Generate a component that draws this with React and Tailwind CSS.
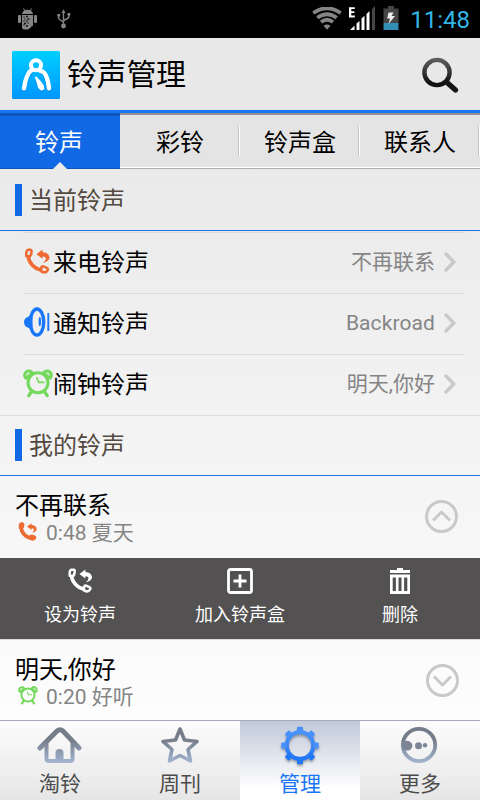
import React from "react";

const cjk = "font-['Noto_Sans_CJK_SC',sans-serif] whitespace-nowrap";
const latin = "font-['Roboto','Noto_Sans_CJK_SC',sans-serif]";

function CallIcon({ className, bold = false }) {
  return (
    <svg viewBox="0 0 26 26" className={className} fill="none" stroke="currentColor">
      <path d="M4.2 7 C4.2 14.500 11 21.800 18.500 21.800" strokeWidth={bold ? 5 : 3.8} />
      <path d="M4 1.800 L6.400 1.800 Q7.700 2 7.500 3.600 L7 6.800 Q6.400 8.400 4.600 8.200 L2.400 8 Q1.600 3 4 1.800 Z" strokeWidth="2.6" fill={bold ? "currentColor" : "none"} />
      <path d="M17.6 19 Q18.400 17.800 20 18.600 L22.800 19.800 Q24.200 20.600 23.600 22.200 Q22.400 24.800 19 24.200 L17 23.200 Q16.200 22.200 17.600 19 Z" strokeWidth="2.6" fill={bold ? "currentColor" : "none"} />
      <path d="M12.4 6.200 L18.600 1.600 L18.600 4.200 Q25 4.600 25.600 9.800 Q25 13.200 19 15 Q22.600 11.600 21.600 9.800 Q20.800 8.600 18.600 8.600 L18.600 10.800 Z" fill="currentColor" stroke="none" />
    </svg>
  );
}

function BellIcon({ className }) {
  return (
    <svg viewBox="0 0 26 30" className={className} fill="none" stroke="currentColor">
      <path d="M8.500 6.500 L4.400 9.800 Q0 11 0 15 Q0 19.500 4.400 20.700 L8.500 23.500 Z" fill="currentColor" stroke="none" />
      <ellipse cx="13" cy="15" rx="6.700" ry="13" strokeWidth="3.400" />
      <ellipse cx="15.800" cy="14.600" rx="1.200" ry="4.600" fill="currentColor" stroke="none" />
      <path d="M24.300 6 V24" strokeWidth="1.900" />
    </svg>
  );
}

function AlarmIcon({ className }) {
  return (
    <svg viewBox="0 0 30 29" className={className} fill="none" stroke="currentColor" strokeLinecap="round">
      <circle cx="15" cy="13.800" r="10" strokeWidth="3" />
      <path d="M2.800 9 A4 4 0 1 1 9 3.400 M27.200 9 A4 4 0 1 0 21 3.400 M4 8.400 L8.800 4.500 M26 8.400 L21.200 4.500" strokeWidth="3.200" />
      <path d="M8.600 22.500 L5.800 26.600 M21.400 22.500 L24.200 26.600" strokeWidth="3.400" />
      <path d="M13.600 8.400 L15.800 13.300 H21.500" strokeWidth="1.700" strokeLinecap="butt" />
    </svg>
  );
}

function StatusBar() {
  return (
    <div className="flex h-[38px] items-center bg-black">
      <svg width="19" height="22" viewBox="0 0 19 22" className="ml-[18px] text-[#858585]" fill="currentColor">
        <path d="M4 6 Q5 1.800 9.500 1.800 Q14 1.800 15 6 Z M4 7 H15 V17 Q15 18.500 13 18.500 V19.500 L10 21.500 H5.500 L4 20 Z" />
        <rect x="0" y="7" width="3" height="8" rx="1" />
        <rect x="16" y="7" width="3" height="8" rx="1" />
        <path d="M5.500 .5 L7 3 M13.500 .5 L12 3" stroke="currentColor" />
        <path d="M5.500 9 h1 M8 8.500 h2 M6.500 11 h1 M9.500 11 h2 M5.500 13 h1 M8 13 h1.500 M6 15.500 h2 M9.500 15 h1 M5.500 17 h1 M8 18 h2" stroke="#161616" strokeWidth="1.300" />
      </svg>
      <svg width="14" height="20" viewBox="0 0 14 20" className="ml-[20px] text-[#858585]" fill="none" stroke="currentColor" strokeWidth="1.400">
        <path d="M6.500 3 V16 M1.600 6 V9 Q1.600 10.500 6.500 13 M11.800 5 V8 Q11.500 9.500 6.500 11.500" />
        <path d="M4.500 4 L6.500 .2 L8.500 4 Z M.4 5 h2.800 v2.500 h-2.800 Z M10.500 4 h2.800 v2.500 h-2.800 Z" fill="currentColor" stroke="none" />
        <circle cx="6.500" cy="17" r="2.400" fill="currentColor" stroke="none" />
      </svg>
      <svg width="30" height="23" viewBox="0 0 30 23" className="mb-[1px] ml-auto" fill="none" stroke="#858585" strokeWidth="3.800">
        <path d="M1.300 6 Q15 -3.500 28.700 6 M5.300 10.700 Q15 3.700 24.700 10.700 M9 15 Q15 10.600 21 15" />
        <path d="M11.500 18.800 Q15 16 18.500 18.800 L15 22.800 Z" fill="#858585" stroke="none" />
      </svg>
      <svg width="27" height="25" viewBox="0 0 27 25" className="mb-[3px] ml-[6px]">
        <path d="M1 2.200 H6.800 V4.100 H3.300 V6.300 H6.400 V8 H3.300 V10.600 H6.800 V12.600 H1 Z" fill="white" />
        <path d="M2 25 L6.500 20.500 V25 Z M8.500 18.500 L11.500 16 V25 H8.500 Z M13.500 13.500 L16.500 10.800 V25 H13.500 Z M18.500 9 L21.500 6 V25 H18.500 Z" fill="white" />
        <path d="M24 4 L27 1 V25 H24 Z" fill="#454545" />
      </svg>
      <svg width="16" height="24" viewBox="0 0 16 24" className="mb-[2px] ml-[8px]">
        <path d="M5 0 H11 V2.500 H15.500 V17 H.5 V2.500 H5 Z" fill="#454545" />
        <rect x=".5" y="17" width="15" height="7" fill="#318fb3" />
        <path d="M5.500 6.500 H10.500 L8.500 10 H12 L5.500 18 L7 12.500 H4.200 Z" fill="#eee" />
      </svg>
      <span className={`${latin} mt-[1px] mr-[10px] ml-[11px] text-[24px] leading-[24px] text-[#33b5e5]`}>11:48</span>
    </div>
  );
}

function Header() {
  return (
    <div className="flex h-[72px] items-center bg-[#e8e8e8] pl-[12px]">
      <svg width="48" height="48" viewBox="0 0 48 48" className="mt-[2px]">
        <defs>
          <linearGradient id="logo" x1="0" y1="0" x2="0" y2="1">
            <stop offset="0" stopColor="#00cfff" />
            <stop offset="1" stopColor="#0096ff" />
          </linearGradient>
        </defs>
        <rect width="48" height="48" rx="1.500" fill="url(#logo)" />
        <g fill="none" strokeLinecap="round" strokeLinejoin="round">
          <g stroke="#0880dc" opacity=".6" transform="translate(0 1.500)">
            <path d="M18.500 20.500 Q14 25 12 37.300 M30 20.500 Q35 22 37 37.300 M25.500 29 L30 37.500" strokeWidth="4.400" />
          </g>
          <g stroke="white">
            <circle cx="24" cy="14.300" r="5" strokeWidth="4" />
            <path d="M20 18.500 Q14 23 12 37.300 M28.500 20 Q35 20.500 37 37.300" strokeWidth="4.400" />
            <path d="M24 26.500 L27 36.500 Q29.500 40 31.500 37.500 Q32 34.500 24 26.500 Z" fill="white" strokeWidth="1.800" />
          </g>
        </g>
      </svg>
      <h1 className={`${cjk} mb-[5px] ml-[7px] text-[30px] leading-[40px] font-normal tracking-[-0.300px] text-black`}>铃声管理</h1>
      <svg width="38" height="38" viewBox="0 0 38 38" className="mt-[2px] mr-[21px] ml-auto" fill="none">
        <defs>
          <linearGradient id="lens" x1="0" y1="0" x2="0" y2="36" gradientUnits="userSpaceOnUse">
            <stop offset="0" stopColor="#686868" />
            <stop offset=".75" stopColor="#111" />
          </linearGradient>
        </defs>
        <circle cx="16" cy="16.500" r="12.600" stroke="url(#lens)" strokeWidth="4.400" />
        <path d="M26 26.500 L34.500 34" stroke="#161616" strokeWidth="5.200" strokeLinecap="round" />
      </svg>
    </div>
  );
}

function Tabs() {
  return (
    <div className="grid h-[56px] grid-cols-4 border-b border-[#adadad] bg-[#e4e4e4]">
      <div className="relative flex justify-center border-t-[3px] border-[#1055b8] bg-[#1269e6] pt-[8px] shadow-[0_1px_0_#1055b8]">
        <span className={`${cjk} mr-[2px] text-[24px] leading-[34px] text-white`}>铃声</span>
        <span className="absolute bottom-[-1px] left-[53px] h-[7px] w-[14px] bg-[#ebebeb] [clip-path:polygon(50%_0,100%_100%,0_100%)]" />
      </div>
      {["彩铃", "铃声盒", "联系人"].map((name) => (
        <div key={name} className="flex border-t-2 border-b border-t-[#949290] border-b-white pt-[9px]">
          <span className={`${cjk} w-full pl-[2px] text-center text-[24px] leading-[34px] text-black`}>{name}</span>
          <span className="mt-[2px] h-[30px] w-[2px] shrink-0 border-r border-l border-r-white border-l-[#c6c6c6]" />
        </div>
      ))}
    </div>
  );
}

function Section({ title }) {
  return (
    <div className="flex h-full items-center pl-[15px]">
      <span className="h-[32px] w-[7px] bg-[#1269e6]" />
      <h2 className={`${cjk} mb-[2px] ml-[7px] text-[24px] leading-[34px] font-normal text-[#534940]`}>{title}</h2>
    </div>
  );
}

function SettingRow({ icon, label, value, last }) {
  return (
    <div className={last ? "h-[60px]" : "h-[61px]"}>
      <div className={`flex h-full items-center ${last ? "" : "mr-[15px] ml-[23px] border-b border-[#dcdcdc]"}`}>
        <span className={`flex w-[30px] justify-center ${last ? "ml-[23px]" : ""}`}>{icon}</span>
        <span className={`${cjk} mb-[5px] text-[24px] leading-[34px] text-black`}>{label}</span>
        <span className={`${latin} mb-[2px] ml-auto text-[21px] leading-[30px] whitespace-nowrap text-[#858585]`}>{value}</span>
        <svg width="13" height="20" viewBox="0 0 13 20" className={`mb-[2px] ml-[9px] ${last ? "mr-[23px]" : "mr-[8px]"}`} fill="none" stroke="#c9c9c9" strokeWidth="3.400">
          <path d="M2 2 L9.800 10 L2 18" strokeLinecap="round" />
        </svg>
      </div>
    </div>
  );
}

function Song({ title, time, name, icon, open }) {
  return (
    <div className="flex h-full pt-[14px] pl-[15px]">
      <div>
        <div className={`${latin} h-[30px] text-[24px] leading-[32px] whitespace-nowrap text-black`}>{title}</div>
        <div className="flex h-[26px] items-start">
          <span className="flex w-[31px] pt-[2px] pl-[3px]">{icon}</span>
          <span className={`${latin} text-[21px] leading-[26px] whitespace-nowrap text-[#858585]`}>{time} {name}</span>
        </div>
      </div>
      <svg width="34" height="34" viewBox="0 0 34 34" className={`mt-[10px] ml-auto ${open ? "mr-[22px]" : "mr-[21px]"}`} fill="none" stroke="#c9c9c9" strokeWidth="3">
        <circle cx="17.500" cy="16.500" r="15" />
        <path d={open ? "M9 20.500 L17.500 12 L26 20.500" : "M9 12.500 L17.500 21 L26 12.500"} strokeLinejoin="round" />
      </svg>
    </div>
  );
}

function Action({ icon, label }) {
  return (
    <div className="flex flex-col items-center pt-[10px]">
      <span className="h-[26px]">{icon}</span>
      <span className={`${cjk} mt-[6px] text-[18px] leading-[26px] text-white`}>{label}</span>
    </div>
  );
}

function NavItem({ icon, label, active }) {
  return (
    <div className={`flex flex-col items-center pt-[4px] ${active ? "bg-linear-to-b from-[#c1c9d9] to-white to-85%" : ""}`}>
      {icon}
      <span className={`${cjk} text-[21px] leading-[30px] ${active ? "text-[#1a76f5]" : "text-[#4c4c4c]"}`}>{label}</span>
    </div>
  );
}

const teeth = [0, 45, 90, 135, 180, 225, 270, 315];

export default function App() {
  return (
    <div className="h-[800px] w-[480px] overflow-hidden bg-[#fcfcfc]">
      <StatusBar />
      <Header />
      <div className="h-[3px] bg-[#1a75f8]" />
      <Tabs />
      <div className="flex h-[551px] flex-col bg-linear-to-b from-[#eaeaea] to-[#fdfdfd]">
        <div className="h-[62px] border-b border-[#1f74ec]"><Section title="当前铃声" /></div>
        <div className="mr-[15px] ml-[23px] h-[2px] border-b border-[#dcdcdc]" />
        <SettingRow icon={<CallIcon className="mr-[3px] mb-[5px] h-[26px] w-[26px] text-[#ee6b34]" />} label="来电铃声" value="不再联系" />
        <SettingRow icon={<BellIcon className="mr-[3px] mb-[4px] h-[30px] w-[26px] text-[#1a76f8]" />} label="通知铃声" value={<span className="tracking-[0.100px]">Backroad</span>} />
        <SettingRow icon={<AlarmIcon className="mb-[4px] h-[29px] w-[30px] text-[#74d95c]" />} label="闹钟铃声" value="明天,你好" last />
        <div className="h-[61px] border-t border-b border-t-[#dcdcdc] border-b-[#1f74ec] pb-[2px]"><Section title="我的铃声" /></div>
        <div className="h-[82px]">
          <Song title="不再联系" time="0:48" name="夏天" icon={<CallIcon bold className="h-[19px] w-[19px] text-[#ee6b34]" />} open />
        </div>
        <div className="grid h-[81px] grid-cols-3 bg-[#535152]">
          <Action icon={<CallIcon className="h-[25px] w-[26px] text-white" />} label="设为铃声" />
          <Action
            icon={
              <svg width="26" height="26" viewBox="0 0 26 26" fill="none" stroke="white" strokeWidth="2.800">
                <rect x="1.500" y="1.500" width="23" height="23" rx="2" />
                <path d="M6.500 13 H19.500 M13 6.500 V19.500" />
              </svg>
            }
            label="加入铃声盒"
          />
          <Action
            icon={
              <svg width="20" height="26" viewBox="0 0 20 26" fill="none" stroke="white">
                <path d="M0 3.500 H20" strokeWidth="3" />
                <path d="M7 1 H13" strokeWidth="2" />
                <path d="M1.300 8 H18.700 V24.500 H1.300 Z" strokeWidth="2.800" />
                <path d="M7.200 8 V24 M12.800 8 V24" strokeWidth="2.600" />
              </svg>
            }
            label="删除"
          />
        </div>
        <div className="h-[81px] border-t border-[#dcdcdc]">
          <Song title="明天,你好" time="0:20" name="好听" icon={<AlarmIcon className="h-[19px] w-[20px] text-[#74d95c]" />} />
        </div>
      </div>
      <nav className="grid h-[80px] grid-cols-4 border-t border-[#aaa8bc] bg-linear-to-b from-[#fcfcfc] to-[#e6e6e6]">
        <NavItem
          icon={
            <svg width="46" height="42" viewBox="0 0 46 42" fill="none" stroke="url(#steel)" className="mr-[1px]">
              <defs>
                <linearGradient id="steel" x1="0" y1="4" x2="0" y2="40" gradientUnits="userSpaceOnUse">
                  <stop offset=".3" stopColor="#757d8b" />
                  <stop offset="1" stopColor="#a9bbd8" />
                </linearGradient>
              </defs>
              <path d="M3 23 L20 6 Q23 3.500 26 6 L42 23" strokeWidth="5" strokeLinecap="round" />
              <path d="M9.500 17 V33.500 Q9.500 36 12 36 H33 Q35.500 36 35.500 33.500 V17" strokeWidth="4" />
              <path d="M18.500 37 V28 Q18.500 24 22.500 24 Q26.500 24 26.500 28 V37 Z" fill="url(#steel)" stroke="none" />
            </svg>
          }
          label="淘铃"
        />
        <NavItem
          icon={
            <svg width="40" height="42" viewBox="0 0 40 42" fill="none" stroke="url(#steel)" strokeWidth="3.600" strokeLinejoin="round">
              <path d="M20 4 L24.500 15 L37 16.500 L28 24.500 L30.500 36 L20 30.500 L9.500 36 L12 24.500 L3 16.500 L15.500 15 Z" />
            </svg>
          }
          label="周刊"
        />
        <NavItem
          active
          icon={
            <svg width="40" height="42" viewBox="0 0 40 42" fill="none" className="overflow-visible drop-shadow-[0_2px_1px_rgba(0,0,0,0.3)]">
              <defs>
                <linearGradient id="gear" x1="0" y1="2" x2="0" y2="40" gradientUnits="userSpaceOnUse">
                  <stop offset="0" stopColor="#5298fa" />
                  <stop offset="1" stopColor="#1972f8" />
                </linearGradient>
              </defs>
              <circle cx="20" cy="20.500" r="13.300" stroke="url(#gear)" strokeWidth="4.200" />
              {teeth.map((a) => (
                <rect key={a} x="17" y="1.700" width="6" height="5.500" rx="1" fill={a > 90 && a < 270 ? "#2279f8" : "#4890fa"} transform={`rotate(${a} 20 20.500)`} />
              ))}
            </svg>
          }
          label="管理"
        />
        <NavItem
          icon={
            <svg width="40" height="42" viewBox="0 0 40 42" className="mr-[2px]">
              <circle cx="20" cy="20" r="16.200" fill="none" stroke="url(#steel)" strokeWidth="3.800" />
              <path d="M4 17 Q9 14.500 12 17.500 Q15 20.500 12 24 Q9 27 4 24 Z" fill="#7c8595" />
              <circle cx="19.500" cy="20.800" r="3.500" fill="#7c8595" />
              <circle cx="26" cy="20.300" r="2.200" fill="#7c8595" />
            </svg>
          }
          label="更多"
        />
      </nav>
    </div>
  );
}
